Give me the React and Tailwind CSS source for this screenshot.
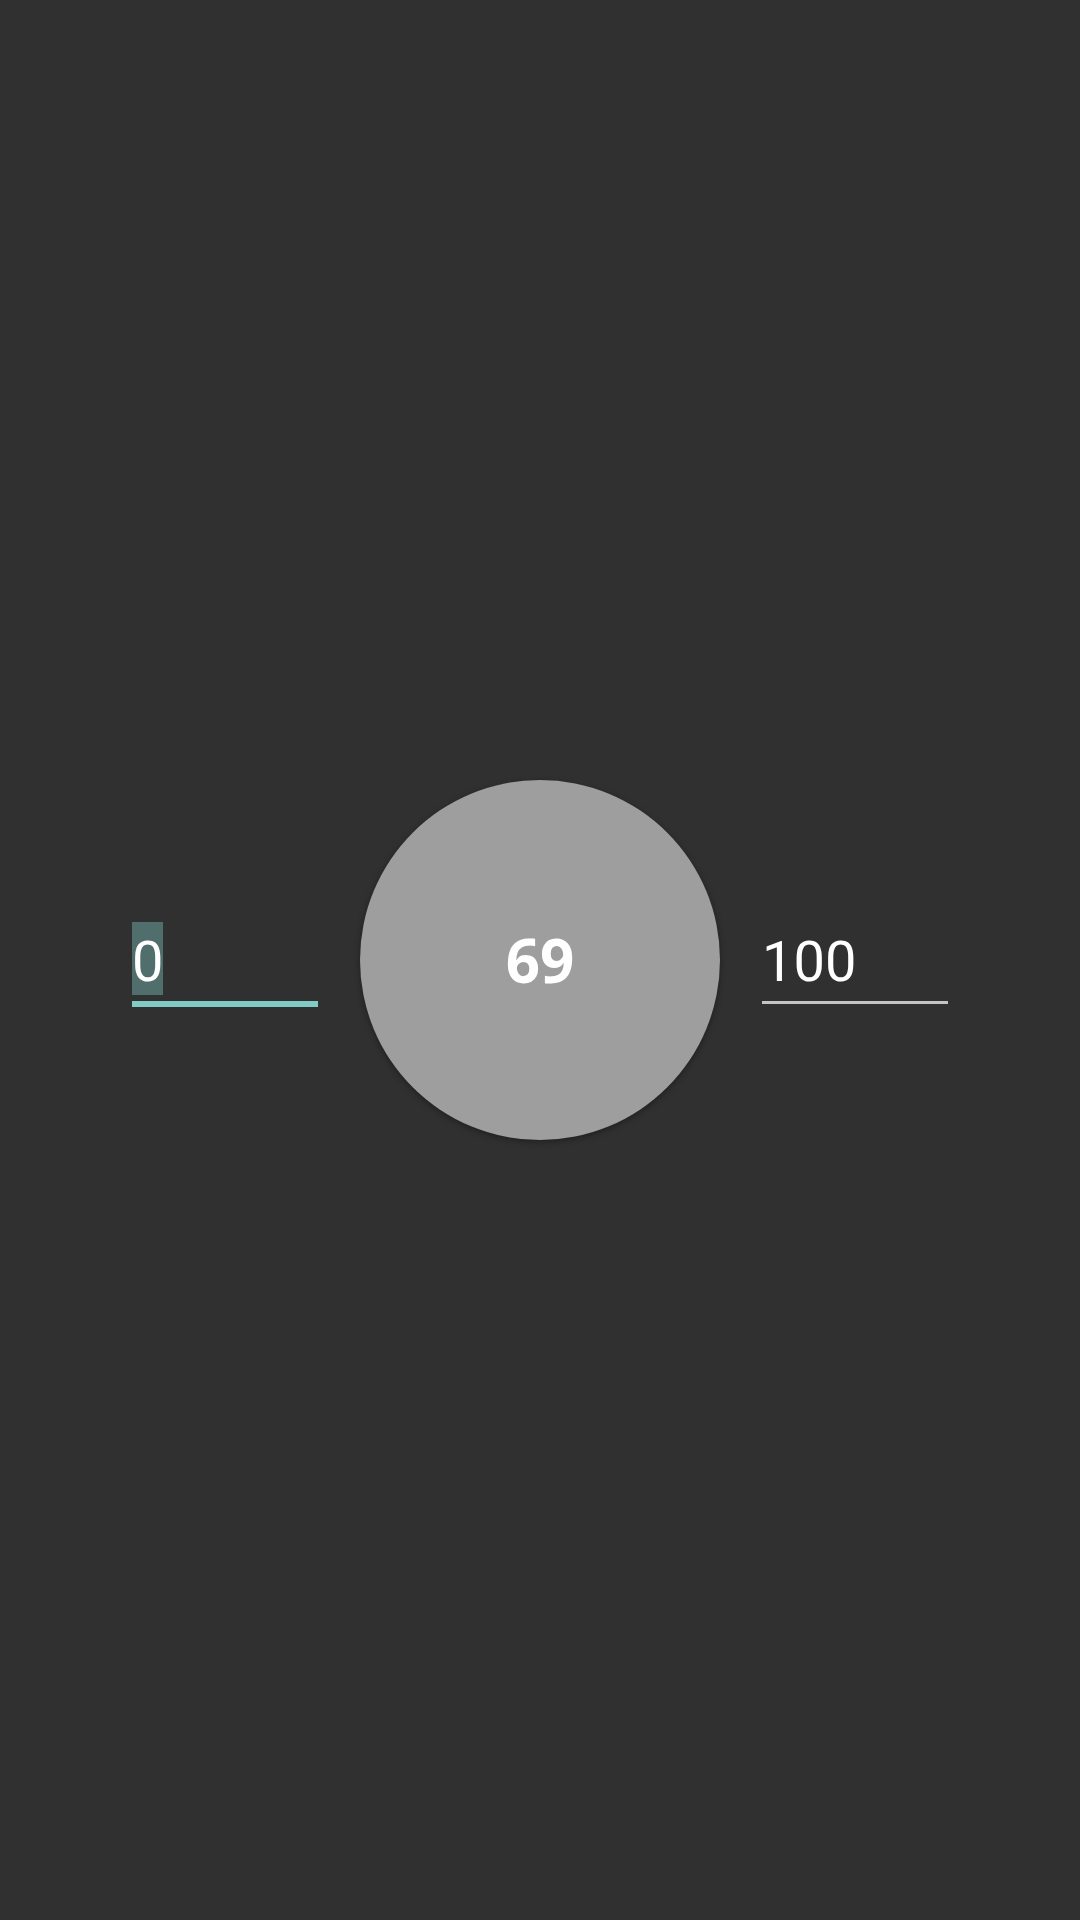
import React from 'react';

const RangeField = ({ value, active }) => {
  return (
    <div className="w-[186px] mt-[142px] flex flex-col">
      {/* Value text */}
      <div className="h-[73px] flex items-start">
        <span
          className={`h-[73px] pt-[7px] leading-[66px] text-[56px] text-white ${active ? 'bg-[#506e6b]' : ''}`}
          style={{ fontFamily: 'Roboto, "Liberation Sans", sans-serif' }}
        >
          {value}
        </span>
      </div>
      {/* Underline */}
      {active ? (
        <div className="mt-[6px] h-[6px] w-full bg-[#80cbc4]" />
      ) : (
        <div className="mt-[6px] h-[3px] w-full bg-[#c4c4c4]" />
      )}
    </div>
  );
};

export default function App() {
  return (
    <div className="w-full h-screen bg-[#303030] flex items-center justify-center">
      <div className="flex items-start gap-[42px]">
        <RangeField value="0" active />
        <div className="w-[360px] h-[360px] rounded-full bg-[#9e9e9e] shadow-[0_2px_6px_rgba(0,0,0,0.35)] flex items-center justify-center">
          <span
            className="text-[60px] font-bold text-white leading-none"
            style={{ fontFamily: '"Open Sans", "Noto Sans", sans-serif' }}
          >
            69
          </span>
        </div>
        <RangeField value="100" />
      </div>
    </div>
  );
}
